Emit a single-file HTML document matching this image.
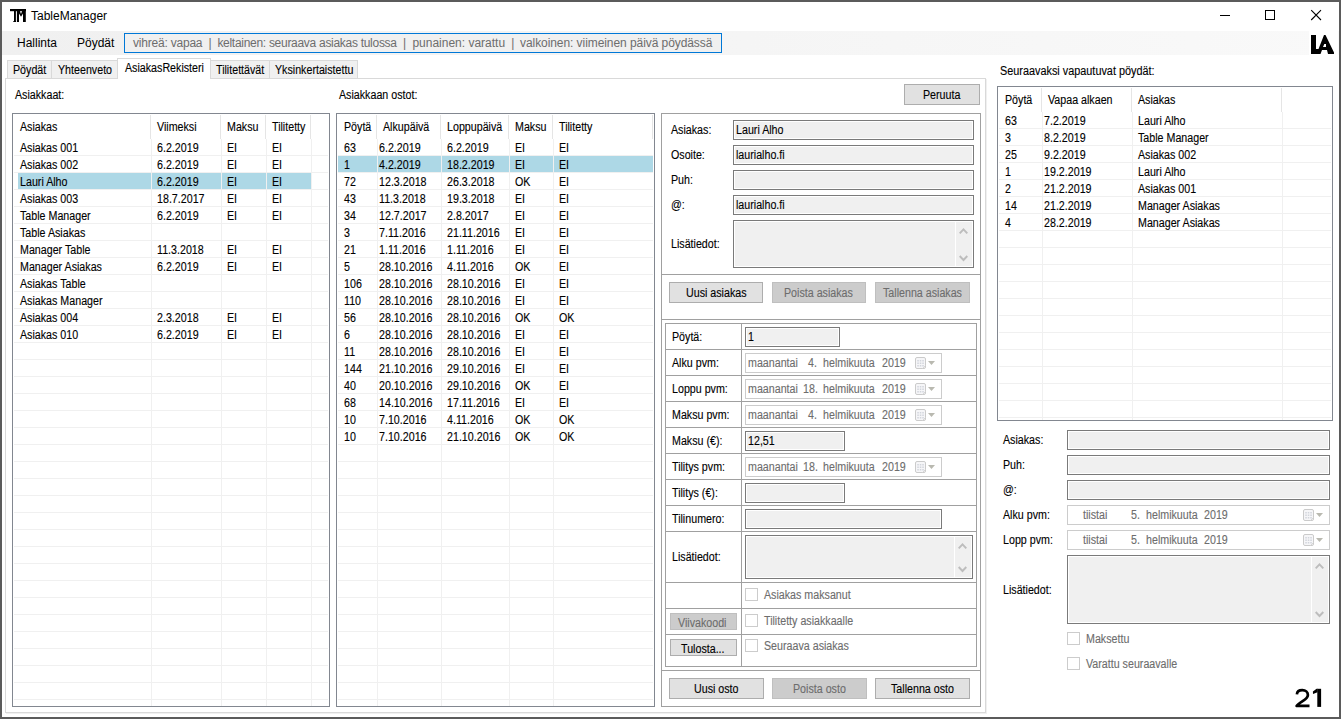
<!DOCTYPE html>
<html><head><meta charset="utf-8"><title>TableManager</title>
<style>
*{margin:0;padding:0;box-sizing:border-box;}
html,body{width:1341px;height:719px;overflow:hidden;background:#fff;}
body{position:relative;font-family:"Liberation Sans", sans-serif;}
div{position:absolute;}
.t{white-space:pre;line-height:1;transform-origin:0 0;}
.m{-webkit-text-stroke:0.12px currentColor;}
</style></head><body>

<div style="left:0px;top:0px;width:1341px;height:719px;background:#5b5b5b;"></div>
<div style="left:2px;top:2px;width:1337px;height:715px;background:#ffffff;"></div>
<svg style="position:absolute;left:0;top:0" width="40" height="30" viewBox="0 0 40 30">
<rect x="10" y="9" width="16" height="2.2" fill="#000"/>
<rect x="14" y="11" width="1.9" height="11" fill="#000"/>
<rect x="13.3" y="21" width="2.6" height="1" fill="#000"/>
<rect x="16.9" y="11" width="2.1" height="11" fill="#000"/>
<rect x="23" y="11" width="2.8" height="11" fill="#000"/>
<polygon points="19,11 19.9,11 21,14 22.1,11 23,11 23,13.6 21,16.8 19,13.6" fill="#000"/>
</svg>
<div class="t" style="left:31px;top:10px;font-size:12px;color:#000;letter-spacing:0px;">TableManager</div>
<div style="left:1220px;top:15px;width:10px;height:1px;background:#000;"></div>
<div style="left:1265px;top:10px;width:10px;height:10px;border:1px solid #000;"></div>
<svg style="position:absolute;left:1310px;top:9px" width="13" height="13" viewBox="0 0 13 13">
<path d="M1.2 1.2 L11 11 M11 1.2 L1.2 11" stroke="#000" stroke-width="1.1" fill="none"/>
</svg>
<div style="left:2px;top:31px;width:1337px;height:24px;background:linear-gradient(to right,#f0f0f0,#f9f9f9);"></div>
<div class="t" style="left:17px;top:37px;font-size:12px;color:#000;letter-spacing:0px;">Hallinta</div>
<div class="t" style="left:77px;top:37px;font-size:12px;color:#000;letter-spacing:0px;">Pöydät</div>
<div style="left:124px;top:33px;width:598px;height:20px;border:1px solid #0078d7;background:#f0f0f0;"></div>
<div class="t" style="left:133px;top:37px;font-size:12px;color:#6d6d6d;letter-spacing:-0.21px;">vihreä: vapaa</div>
<div class="t" style="left:208.6px;top:37px;font-size:12px;color:#6d6d6d;letter-spacing:0px;">|</div>
<div class="t" style="left:217.4px;top:37px;font-size:12px;color:#6d6d6d;letter-spacing:-0.29px;">keltainen: seuraava asiakas tulossa</div>
<div class="t" style="left:403px;top:37px;font-size:12px;color:#6d6d6d;letter-spacing:0px;">|</div>
<div class="t" style="left:412.4px;top:37px;font-size:12px;color:#6d6d6d;letter-spacing:0px;">punainen: varattu</div>
<div class="t" style="left:511.2px;top:37px;font-size:12px;color:#6d6d6d;letter-spacing:0px;">|</div>
<div class="t" style="left:520px;top:37px;font-size:12px;color:#6d6d6d;letter-spacing:-0.07px;">valkoinen: viimeinen päivä pöydässä</div>
<div style="left:1309px;top:31px;width:29px;height:24px;background:#ffffff;"></div>
<svg style="position:absolute;left:1300px;top:28px" width="40" height="30" viewBox="1300 28 40 30">
<path fill-rule="evenodd" fill="#000" d="M1311 35 L1316 35 L1316 49 L1318.5 49 L1324 35 L1325.5 35 L1334 52.5 L1334 54 L1328 54 L1327 50 L1322 50 L1320.5 54 L1311 54 Z M1324.3 44 L1326 44 L1326 47 L1323 47 Z"/>
</svg>
<div style="left:5px;top:78px;width:981px;height:635px;border:1px solid #d9d9d9;background:#fff;"></div>
<div style="left:986px;top:79px;width:1px;height:635px;background:#f0f0f0;"></div>
<div style="left:6px;top:713px;width:981px;height:1px;background:#f0f0f0;"></div>
<div style="left:7px;top:60px;width:45px;height:19px;border:1px solid #d9d9d9;background:#f0f0f0;"></div>
<div class="t m" style="left:13px;top:64px;font-size:12px;color:#000;transform:scaleX(0.89);">Pöydät</div>
<div style="left:51px;top:60px;width:67px;height:19px;border:1px solid #d9d9d9;background:#f0f0f0;"></div>
<div class="t m" style="left:58px;top:64px;font-size:12px;color:#000;transform:scaleX(0.89);">Yhteenveto</div>
<div style="left:210px;top:60px;width:60px;height:19px;border:1px solid #d9d9d9;background:#f0f0f0;"></div>
<div class="t m" style="left:216px;top:64px;font-size:12px;color:#000;transform:scaleX(0.89);">Tilitettävät</div>
<div style="left:269px;top:60px;width:89px;height:19px;border:1px solid #d9d9d9;background:#f0f0f0;"></div>
<div class="t m" style="left:275px;top:64px;font-size:12px;color:#000;transform:scaleX(0.89);">Yksinkertaistettu</div>
<div style="left:117px;top:58px;width:94px;height:21px;border:1px solid #d9d9d9;background:#fff;border-bottom:none;"></div>
<div class="t m" style="left:125px;top:62px;font-size:12px;color:#000;transform:scaleX(0.89);">AsiakasRekisteri</div>
<div class="t m" style="left:15px;top:89px;font-size:12px;color:#000;transform:scaleX(0.89);">Asiakkaat:</div>
<div class="t m" style="left:339px;top:89px;font-size:12px;color:#000;transform:scaleX(0.89);">Asiakkaan ostot:</div>
<div style="left:12px;top:113px;width:318px;height:594px;border:1px solid #828790;background:#fff;"></div>
<div style="left:150px;top:115px;width:1px;height:24px;background:#e5e5e5;"></div>
<div style="left:220px;top:115px;width:1px;height:24px;background:#e5e5e5;"></div>
<div style="left:265px;top:115px;width:1px;height:24px;background:#e5e5e5;"></div>
<div style="left:310px;top:115px;width:1px;height:24px;background:#e5e5e5;"></div>
<div class="t m" style="left:20px;top:121px;font-size:12px;color:#000;transform:scaleX(0.89);">Asiakas</div>
<div class="t m" style="left:157px;top:121px;font-size:12px;color:#000;transform:scaleX(0.89);">Viimeksi</div>
<div class="t m" style="left:227px;top:121px;font-size:12px;color:#000;transform:scaleX(0.89);">Maksu</div>
<div class="t m" style="left:272px;top:121px;font-size:12px;color:#000;transform:scaleX(0.89);">Tilitetty</div>
<div style="left:18px;top:173px;width:293px;height:16px;background:#add8e6;"></div>
<div style="left:14px;top:155px;width:314px;height:1px;background:#f0f0f0;"></div>
<div style="left:14px;top:172px;width:314px;height:1px;background:#f0f0f0;"></div>
<div style="left:14px;top:189px;width:314px;height:1px;background:#f0f0f0;"></div>
<div style="left:14px;top:206px;width:314px;height:1px;background:#f0f0f0;"></div>
<div style="left:14px;top:223px;width:314px;height:1px;background:#f0f0f0;"></div>
<div style="left:14px;top:240px;width:314px;height:1px;background:#f0f0f0;"></div>
<div style="left:14px;top:257px;width:314px;height:1px;background:#f0f0f0;"></div>
<div style="left:14px;top:274px;width:314px;height:1px;background:#f0f0f0;"></div>
<div style="left:14px;top:291px;width:314px;height:1px;background:#f0f0f0;"></div>
<div style="left:14px;top:308px;width:314px;height:1px;background:#f0f0f0;"></div>
<div style="left:14px;top:325px;width:314px;height:1px;background:#f0f0f0;"></div>
<div style="left:14px;top:342px;width:314px;height:1px;background:#f0f0f0;"></div>
<div style="left:14px;top:359px;width:314px;height:1px;background:#f0f0f0;"></div>
<div style="left:14px;top:376px;width:314px;height:1px;background:#f0f0f0;"></div>
<div style="left:14px;top:393px;width:314px;height:1px;background:#f0f0f0;"></div>
<div style="left:14px;top:410px;width:314px;height:1px;background:#f0f0f0;"></div>
<div style="left:14px;top:427px;width:314px;height:1px;background:#f0f0f0;"></div>
<div style="left:14px;top:444px;width:314px;height:1px;background:#f0f0f0;"></div>
<div style="left:14px;top:461px;width:314px;height:1px;background:#f0f0f0;"></div>
<div style="left:14px;top:478px;width:314px;height:1px;background:#f0f0f0;"></div>
<div style="left:14px;top:495px;width:314px;height:1px;background:#f0f0f0;"></div>
<div style="left:14px;top:512px;width:314px;height:1px;background:#f0f0f0;"></div>
<div style="left:14px;top:529px;width:314px;height:1px;background:#f0f0f0;"></div>
<div style="left:14px;top:546px;width:314px;height:1px;background:#f0f0f0;"></div>
<div style="left:14px;top:563px;width:314px;height:1px;background:#f0f0f0;"></div>
<div style="left:14px;top:580px;width:314px;height:1px;background:#f0f0f0;"></div>
<div style="left:14px;top:597px;width:314px;height:1px;background:#f0f0f0;"></div>
<div style="left:14px;top:614px;width:314px;height:1px;background:#f0f0f0;"></div>
<div style="left:14px;top:631px;width:314px;height:1px;background:#f0f0f0;"></div>
<div style="left:14px;top:648px;width:314px;height:1px;background:#f0f0f0;"></div>
<div style="left:14px;top:665px;width:314px;height:1px;background:#f0f0f0;"></div>
<div style="left:14px;top:682px;width:314px;height:1px;background:#f0f0f0;"></div>
<div style="left:14px;top:699px;width:314px;height:1px;background:#f0f0f0;"></div>
<div style="left:151px;top:139px;width:1px;height:567px;background:#f0f0f0;"></div>
<div style="left:221px;top:139px;width:1px;height:567px;background:#f0f0f0;"></div>
<div style="left:266px;top:139px;width:1px;height:567px;background:#f0f0f0;"></div>
<div style="left:311px;top:139px;width:1px;height:567px;background:#f0f0f0;"></div>
<div class="t m" style="left:20px;top:142px;font-size:12px;color:#000;transform:scaleX(0.89);">Asiakas 001</div>
<div class="t m" style="left:157px;top:142px;font-size:12px;color:#000;transform:scaleX(0.89);">6.2.2019</div>
<div class="t m" style="left:227px;top:142px;font-size:12px;color:#000;transform:scaleX(0.89);">EI</div>
<div class="t m" style="left:272px;top:142px;font-size:12px;color:#000;transform:scaleX(0.89);">EI</div>
<div class="t m" style="left:20px;top:159px;font-size:12px;color:#000;transform:scaleX(0.89);">Asiakas 002</div>
<div class="t m" style="left:157px;top:159px;font-size:12px;color:#000;transform:scaleX(0.89);">6.2.2019</div>
<div class="t m" style="left:227px;top:159px;font-size:12px;color:#000;transform:scaleX(0.89);">EI</div>
<div class="t m" style="left:272px;top:159px;font-size:12px;color:#000;transform:scaleX(0.89);">EI</div>
<div class="t m" style="left:20px;top:176px;font-size:12px;color:#000;transform:scaleX(0.89);">Lauri Alho</div>
<div class="t m" style="left:157px;top:176px;font-size:12px;color:#000;transform:scaleX(0.89);">6.2.2019</div>
<div class="t m" style="left:227px;top:176px;font-size:12px;color:#000;transform:scaleX(0.89);">EI</div>
<div class="t m" style="left:272px;top:176px;font-size:12px;color:#000;transform:scaleX(0.89);">EI</div>
<div class="t m" style="left:20px;top:193px;font-size:12px;color:#000;transform:scaleX(0.89);">Asiakas 003</div>
<div class="t m" style="left:157px;top:193px;font-size:12px;color:#000;transform:scaleX(0.89);">18.7.2017</div>
<div class="t m" style="left:227px;top:193px;font-size:12px;color:#000;transform:scaleX(0.89);">EI</div>
<div class="t m" style="left:272px;top:193px;font-size:12px;color:#000;transform:scaleX(0.89);">EI</div>
<div class="t m" style="left:20px;top:210px;font-size:12px;color:#000;transform:scaleX(0.89);">Table Manager</div>
<div class="t m" style="left:157px;top:210px;font-size:12px;color:#000;transform:scaleX(0.89);">6.2.2019</div>
<div class="t m" style="left:227px;top:210px;font-size:12px;color:#000;transform:scaleX(0.89);">EI</div>
<div class="t m" style="left:272px;top:210px;font-size:12px;color:#000;transform:scaleX(0.89);">EI</div>
<div class="t m" style="left:20px;top:227px;font-size:12px;color:#000;transform:scaleX(0.89);">Table Asiakas</div>
<div class="t m" style="left:20px;top:244px;font-size:12px;color:#000;transform:scaleX(0.89);">Manager Table</div>
<div class="t m" style="left:157px;top:244px;font-size:12px;color:#000;transform:scaleX(0.89);">11.3.2018</div>
<div class="t m" style="left:227px;top:244px;font-size:12px;color:#000;transform:scaleX(0.89);">EI</div>
<div class="t m" style="left:272px;top:244px;font-size:12px;color:#000;transform:scaleX(0.89);">EI</div>
<div class="t m" style="left:20px;top:261px;font-size:12px;color:#000;transform:scaleX(0.89);">Manager Asiakas</div>
<div class="t m" style="left:157px;top:261px;font-size:12px;color:#000;transform:scaleX(0.89);">6.2.2019</div>
<div class="t m" style="left:227px;top:261px;font-size:12px;color:#000;transform:scaleX(0.89);">EI</div>
<div class="t m" style="left:272px;top:261px;font-size:12px;color:#000;transform:scaleX(0.89);">EI</div>
<div class="t m" style="left:20px;top:278px;font-size:12px;color:#000;transform:scaleX(0.89);">Asiakas Table</div>
<div class="t m" style="left:20px;top:295px;font-size:12px;color:#000;transform:scaleX(0.89);">Asiakas Manager</div>
<div class="t m" style="left:20px;top:312px;font-size:12px;color:#000;transform:scaleX(0.89);">Asiakas 004</div>
<div class="t m" style="left:157px;top:312px;font-size:12px;color:#000;transform:scaleX(0.89);">2.3.2018</div>
<div class="t m" style="left:227px;top:312px;font-size:12px;color:#000;transform:scaleX(0.89);">EI</div>
<div class="t m" style="left:272px;top:312px;font-size:12px;color:#000;transform:scaleX(0.89);">EI</div>
<div class="t m" style="left:20px;top:329px;font-size:12px;color:#000;transform:scaleX(0.89);">Asiakas 010</div>
<div class="t m" style="left:157px;top:329px;font-size:12px;color:#000;transform:scaleX(0.89);">6.2.2019</div>
<div class="t m" style="left:227px;top:329px;font-size:12px;color:#000;transform:scaleX(0.89);">EI</div>
<div class="t m" style="left:272px;top:329px;font-size:12px;color:#000;transform:scaleX(0.89);">EI</div>
<div style="left:336px;top:113px;width:319px;height:594px;border:1px solid #828790;background:#fff;"></div>
<div style="left:376px;top:115px;width:1px;height:24px;background:#e5e5e5;"></div>
<div style="left:440px;top:115px;width:1px;height:24px;background:#e5e5e5;"></div>
<div style="left:508px;top:115px;width:1px;height:24px;background:#e5e5e5;"></div>
<div style="left:552px;top:115px;width:1px;height:24px;background:#e5e5e5;"></div>
<div style="left:652px;top:115px;width:1px;height:24px;background:#e5e5e5;"></div>
<div class="t m" style="left:344px;top:121px;font-size:12px;color:#000;transform:scaleX(0.89);">Pöytä</div>
<div class="t m" style="left:383px;top:121px;font-size:12px;color:#000;transform:scaleX(0.89);">Alkupäivä</div>
<div class="t m" style="left:447px;top:121px;font-size:12px;color:#000;transform:scaleX(0.89);">Loppupäivä</div>
<div class="t m" style="left:515px;top:121px;font-size:12px;color:#000;transform:scaleX(0.89);">Maksu</div>
<div class="t m" style="left:559px;top:121px;font-size:12px;color:#000;transform:scaleX(0.89);">Tilitetty</div>
<div style="left:338px;top:156px;width:315px;height:16px;background:#add8e6;"></div>
<div style="left:338px;top:155px;width:315px;height:1px;background:#f0f0f0;"></div>
<div style="left:338px;top:172px;width:315px;height:1px;background:#f0f0f0;"></div>
<div style="left:338px;top:189px;width:315px;height:1px;background:#f0f0f0;"></div>
<div style="left:338px;top:206px;width:315px;height:1px;background:#f0f0f0;"></div>
<div style="left:338px;top:223px;width:315px;height:1px;background:#f0f0f0;"></div>
<div style="left:338px;top:240px;width:315px;height:1px;background:#f0f0f0;"></div>
<div style="left:338px;top:257px;width:315px;height:1px;background:#f0f0f0;"></div>
<div style="left:338px;top:274px;width:315px;height:1px;background:#f0f0f0;"></div>
<div style="left:338px;top:291px;width:315px;height:1px;background:#f0f0f0;"></div>
<div style="left:338px;top:308px;width:315px;height:1px;background:#f0f0f0;"></div>
<div style="left:338px;top:325px;width:315px;height:1px;background:#f0f0f0;"></div>
<div style="left:338px;top:342px;width:315px;height:1px;background:#f0f0f0;"></div>
<div style="left:338px;top:359px;width:315px;height:1px;background:#f0f0f0;"></div>
<div style="left:338px;top:376px;width:315px;height:1px;background:#f0f0f0;"></div>
<div style="left:338px;top:393px;width:315px;height:1px;background:#f0f0f0;"></div>
<div style="left:338px;top:410px;width:315px;height:1px;background:#f0f0f0;"></div>
<div style="left:338px;top:427px;width:315px;height:1px;background:#f0f0f0;"></div>
<div style="left:338px;top:444px;width:315px;height:1px;background:#f0f0f0;"></div>
<div style="left:338px;top:461px;width:315px;height:1px;background:#f0f0f0;"></div>
<div style="left:338px;top:478px;width:315px;height:1px;background:#f0f0f0;"></div>
<div style="left:338px;top:495px;width:315px;height:1px;background:#f0f0f0;"></div>
<div style="left:338px;top:512px;width:315px;height:1px;background:#f0f0f0;"></div>
<div style="left:338px;top:529px;width:315px;height:1px;background:#f0f0f0;"></div>
<div style="left:338px;top:546px;width:315px;height:1px;background:#f0f0f0;"></div>
<div style="left:338px;top:563px;width:315px;height:1px;background:#f0f0f0;"></div>
<div style="left:338px;top:580px;width:315px;height:1px;background:#f0f0f0;"></div>
<div style="left:338px;top:597px;width:315px;height:1px;background:#f0f0f0;"></div>
<div style="left:338px;top:614px;width:315px;height:1px;background:#f0f0f0;"></div>
<div style="left:338px;top:631px;width:315px;height:1px;background:#f0f0f0;"></div>
<div style="left:338px;top:648px;width:315px;height:1px;background:#f0f0f0;"></div>
<div style="left:338px;top:665px;width:315px;height:1px;background:#f0f0f0;"></div>
<div style="left:338px;top:682px;width:315px;height:1px;background:#f0f0f0;"></div>
<div style="left:338px;top:699px;width:315px;height:1px;background:#f0f0f0;"></div>
<div style="left:377px;top:139px;width:1px;height:567px;background:#f0f0f0;"></div>
<div style="left:441px;top:139px;width:1px;height:567px;background:#f0f0f0;"></div>
<div style="left:509px;top:139px;width:1px;height:567px;background:#f0f0f0;"></div>
<div style="left:553px;top:139px;width:1px;height:567px;background:#f0f0f0;"></div>
<div class="t m" style="left:344px;top:142px;font-size:12px;color:#000;transform:scaleX(0.89);">63</div>
<div class="t m" style="left:379px;top:142px;font-size:12px;color:#000;transform:scaleX(0.89);">6.2.2019</div>
<div class="t m" style="left:447px;top:142px;font-size:12px;color:#000;transform:scaleX(0.89);">6.2.2019</div>
<div class="t m" style="left:515px;top:142px;font-size:12px;color:#000;transform:scaleX(0.89);">EI</div>
<div class="t m" style="left:559px;top:142px;font-size:12px;color:#000;transform:scaleX(0.89);">EI</div>
<div class="t m" style="left:344px;top:159px;font-size:12px;color:#000;transform:scaleX(0.89);">1</div>
<div class="t m" style="left:379px;top:159px;font-size:12px;color:#000;transform:scaleX(0.89);">4.2.2019</div>
<div class="t m" style="left:447px;top:159px;font-size:12px;color:#000;transform:scaleX(0.89);">18.2.2019</div>
<div class="t m" style="left:515px;top:159px;font-size:12px;color:#000;transform:scaleX(0.89);">EI</div>
<div class="t m" style="left:559px;top:159px;font-size:12px;color:#000;transform:scaleX(0.89);">EI</div>
<div class="t m" style="left:344px;top:176px;font-size:12px;color:#000;transform:scaleX(0.89);">72</div>
<div class="t m" style="left:379px;top:176px;font-size:12px;color:#000;transform:scaleX(0.89);">12.3.2018</div>
<div class="t m" style="left:447px;top:176px;font-size:12px;color:#000;transform:scaleX(0.89);">26.3.2018</div>
<div class="t m" style="left:515px;top:176px;font-size:12px;color:#000;transform:scaleX(0.89);">OK</div>
<div class="t m" style="left:559px;top:176px;font-size:12px;color:#000;transform:scaleX(0.89);">EI</div>
<div class="t m" style="left:344px;top:193px;font-size:12px;color:#000;transform:scaleX(0.89);">43</div>
<div class="t m" style="left:379px;top:193px;font-size:12px;color:#000;transform:scaleX(0.89);">11.3.2018</div>
<div class="t m" style="left:447px;top:193px;font-size:12px;color:#000;transform:scaleX(0.89);">19.3.2018</div>
<div class="t m" style="left:515px;top:193px;font-size:12px;color:#000;transform:scaleX(0.89);">EI</div>
<div class="t m" style="left:559px;top:193px;font-size:12px;color:#000;transform:scaleX(0.89);">EI</div>
<div class="t m" style="left:344px;top:210px;font-size:12px;color:#000;transform:scaleX(0.89);">34</div>
<div class="t m" style="left:379px;top:210px;font-size:12px;color:#000;transform:scaleX(0.89);">12.7.2017</div>
<div class="t m" style="left:447px;top:210px;font-size:12px;color:#000;transform:scaleX(0.89);">2.8.2017</div>
<div class="t m" style="left:515px;top:210px;font-size:12px;color:#000;transform:scaleX(0.89);">EI</div>
<div class="t m" style="left:559px;top:210px;font-size:12px;color:#000;transform:scaleX(0.89);">EI</div>
<div class="t m" style="left:344px;top:227px;font-size:12px;color:#000;transform:scaleX(0.89);">3</div>
<div class="t m" style="left:379px;top:227px;font-size:12px;color:#000;transform:scaleX(0.89);">7.11.2016</div>
<div class="t m" style="left:447px;top:227px;font-size:12px;color:#000;transform:scaleX(0.89);">21.11.2016</div>
<div class="t m" style="left:515px;top:227px;font-size:12px;color:#000;transform:scaleX(0.89);">EI</div>
<div class="t m" style="left:559px;top:227px;font-size:12px;color:#000;transform:scaleX(0.89);">EI</div>
<div class="t m" style="left:344px;top:244px;font-size:12px;color:#000;transform:scaleX(0.89);">21</div>
<div class="t m" style="left:379px;top:244px;font-size:12px;color:#000;transform:scaleX(0.89);">1.11.2016</div>
<div class="t m" style="left:447px;top:244px;font-size:12px;color:#000;transform:scaleX(0.89);">1.11.2016</div>
<div class="t m" style="left:515px;top:244px;font-size:12px;color:#000;transform:scaleX(0.89);">EI</div>
<div class="t m" style="left:559px;top:244px;font-size:12px;color:#000;transform:scaleX(0.89);">EI</div>
<div class="t m" style="left:344px;top:261px;font-size:12px;color:#000;transform:scaleX(0.89);">5</div>
<div class="t m" style="left:379px;top:261px;font-size:12px;color:#000;transform:scaleX(0.89);">28.10.2016</div>
<div class="t m" style="left:447px;top:261px;font-size:12px;color:#000;transform:scaleX(0.89);">4.11.2016</div>
<div class="t m" style="left:515px;top:261px;font-size:12px;color:#000;transform:scaleX(0.89);">OK</div>
<div class="t m" style="left:559px;top:261px;font-size:12px;color:#000;transform:scaleX(0.89);">EI</div>
<div class="t m" style="left:344px;top:278px;font-size:12px;color:#000;transform:scaleX(0.89);">106</div>
<div class="t m" style="left:379px;top:278px;font-size:12px;color:#000;transform:scaleX(0.89);">28.10.2016</div>
<div class="t m" style="left:447px;top:278px;font-size:12px;color:#000;transform:scaleX(0.89);">28.10.2016</div>
<div class="t m" style="left:515px;top:278px;font-size:12px;color:#000;transform:scaleX(0.89);">EI</div>
<div class="t m" style="left:559px;top:278px;font-size:12px;color:#000;transform:scaleX(0.89);">EI</div>
<div class="t m" style="left:344px;top:295px;font-size:12px;color:#000;transform:scaleX(0.89);">110</div>
<div class="t m" style="left:379px;top:295px;font-size:12px;color:#000;transform:scaleX(0.89);">28.10.2016</div>
<div class="t m" style="left:447px;top:295px;font-size:12px;color:#000;transform:scaleX(0.89);">28.10.2016</div>
<div class="t m" style="left:515px;top:295px;font-size:12px;color:#000;transform:scaleX(0.89);">EI</div>
<div class="t m" style="left:559px;top:295px;font-size:12px;color:#000;transform:scaleX(0.89);">EI</div>
<div class="t m" style="left:344px;top:312px;font-size:12px;color:#000;transform:scaleX(0.89);">56</div>
<div class="t m" style="left:379px;top:312px;font-size:12px;color:#000;transform:scaleX(0.89);">28.10.2016</div>
<div class="t m" style="left:447px;top:312px;font-size:12px;color:#000;transform:scaleX(0.89);">28.10.2016</div>
<div class="t m" style="left:515px;top:312px;font-size:12px;color:#000;transform:scaleX(0.89);">OK</div>
<div class="t m" style="left:559px;top:312px;font-size:12px;color:#000;transform:scaleX(0.89);">OK</div>
<div class="t m" style="left:344px;top:329px;font-size:12px;color:#000;transform:scaleX(0.89);">6</div>
<div class="t m" style="left:379px;top:329px;font-size:12px;color:#000;transform:scaleX(0.89);">28.10.2016</div>
<div class="t m" style="left:447px;top:329px;font-size:12px;color:#000;transform:scaleX(0.89);">28.10.2016</div>
<div class="t m" style="left:515px;top:329px;font-size:12px;color:#000;transform:scaleX(0.89);">EI</div>
<div class="t m" style="left:559px;top:329px;font-size:12px;color:#000;transform:scaleX(0.89);">EI</div>
<div class="t m" style="left:344px;top:346px;font-size:12px;color:#000;transform:scaleX(0.89);">11</div>
<div class="t m" style="left:379px;top:346px;font-size:12px;color:#000;transform:scaleX(0.89);">28.10.2016</div>
<div class="t m" style="left:447px;top:346px;font-size:12px;color:#000;transform:scaleX(0.89);">28.10.2016</div>
<div class="t m" style="left:515px;top:346px;font-size:12px;color:#000;transform:scaleX(0.89);">EI</div>
<div class="t m" style="left:559px;top:346px;font-size:12px;color:#000;transform:scaleX(0.89);">EI</div>
<div class="t m" style="left:344px;top:363px;font-size:12px;color:#000;transform:scaleX(0.89);">144</div>
<div class="t m" style="left:379px;top:363px;font-size:12px;color:#000;transform:scaleX(0.89);">21.10.2016</div>
<div class="t m" style="left:447px;top:363px;font-size:12px;color:#000;transform:scaleX(0.89);">29.10.2016</div>
<div class="t m" style="left:515px;top:363px;font-size:12px;color:#000;transform:scaleX(0.89);">EI</div>
<div class="t m" style="left:559px;top:363px;font-size:12px;color:#000;transform:scaleX(0.89);">EI</div>
<div class="t m" style="left:344px;top:380px;font-size:12px;color:#000;transform:scaleX(0.89);">40</div>
<div class="t m" style="left:379px;top:380px;font-size:12px;color:#000;transform:scaleX(0.89);">20.10.2016</div>
<div class="t m" style="left:447px;top:380px;font-size:12px;color:#000;transform:scaleX(0.89);">29.10.2016</div>
<div class="t m" style="left:515px;top:380px;font-size:12px;color:#000;transform:scaleX(0.89);">OK</div>
<div class="t m" style="left:559px;top:380px;font-size:12px;color:#000;transform:scaleX(0.89);">EI</div>
<div class="t m" style="left:344px;top:397px;font-size:12px;color:#000;transform:scaleX(0.89);">68</div>
<div class="t m" style="left:379px;top:397px;font-size:12px;color:#000;transform:scaleX(0.89);">14.10.2016</div>
<div class="t m" style="left:447px;top:397px;font-size:12px;color:#000;transform:scaleX(0.89);">17.11.2016</div>
<div class="t m" style="left:515px;top:397px;font-size:12px;color:#000;transform:scaleX(0.89);">EI</div>
<div class="t m" style="left:559px;top:397px;font-size:12px;color:#000;transform:scaleX(0.89);">EI</div>
<div class="t m" style="left:344px;top:414px;font-size:12px;color:#000;transform:scaleX(0.89);">10</div>
<div class="t m" style="left:379px;top:414px;font-size:12px;color:#000;transform:scaleX(0.89);">7.10.2016</div>
<div class="t m" style="left:447px;top:414px;font-size:12px;color:#000;transform:scaleX(0.89);">4.11.2016</div>
<div class="t m" style="left:515px;top:414px;font-size:12px;color:#000;transform:scaleX(0.89);">OK</div>
<div class="t m" style="left:559px;top:414px;font-size:12px;color:#000;transform:scaleX(0.89);">OK</div>
<div class="t m" style="left:344px;top:431px;font-size:12px;color:#000;transform:scaleX(0.89);">10</div>
<div class="t m" style="left:379px;top:431px;font-size:12px;color:#000;transform:scaleX(0.89);">7.10.2016</div>
<div class="t m" style="left:447px;top:431px;font-size:12px;color:#000;transform:scaleX(0.89);">21.10.2016</div>
<div class="t m" style="left:515px;top:431px;font-size:12px;color:#000;transform:scaleX(0.89);">OK</div>
<div class="t m" style="left:559px;top:431px;font-size:12px;color:#000;transform:scaleX(0.89);">OK</div>
<div style="left:904px;top:84px;width:76px;height:21px;border:1px solid #adadad;background:#e1e1e1;"></div>
<div class="t m" style="left:923px;top:89px;font-size:12px;color:#000;transform:scaleX(0.89);">Peruuta</div>
<div style="left:661px;top:113px;width:320px;height:594px;border:1px solid #a0a0a0;background:#fff;"></div>
<div style="left:662px;top:274px;width:318px;height:1px;background:#a0a0a0;"></div>
<div style="left:662px;top:319px;width:318px;height:1px;background:#a0a0a0;"></div>
<div style="left:662px;top:670px;width:318px;height:1px;background:#a0a0a0;"></div>
<div class="t m" style="left:671px;top:124px;font-size:12px;color:#000;transform:scaleX(0.89);">Asiakas:</div>
<div style="left:733px;top:120px;width:241px;height:20px;border:1px solid #7a7a7a;background:#f0f0f0;box-shadow:inset 0 0 0 1px #fff;"></div>
<div class="t m" style="left:736px;top:124px;font-size:12px;color:#000;transform:scaleX(0.89);">Lauri Alho</div>
<div class="t m" style="left:671px;top:149px;font-size:12px;color:#000;transform:scaleX(0.89);">Osoite:</div>
<div style="left:733px;top:145px;width:241px;height:20px;border:1px solid #7a7a7a;background:#f0f0f0;box-shadow:inset 0 0 0 1px #fff;"></div>
<div class="t m" style="left:736px;top:149px;font-size:12px;color:#000;transform:scaleX(0.89);">laurialho.fi</div>
<div class="t m" style="left:671px;top:174px;font-size:12px;color:#000;transform:scaleX(0.89);">Puh:</div>
<div style="left:733px;top:170px;width:241px;height:20px;border:1px solid #7a7a7a;background:#f0f0f0;box-shadow:inset 0 0 0 1px #fff;"></div>
<div class="t m" style="left:671px;top:199px;font-size:12px;color:#000;transform:scaleX(0.89);">@:</div>
<div style="left:733px;top:195px;width:241px;height:20px;border:1px solid #7a7a7a;background:#f0f0f0;box-shadow:inset 0 0 0 1px #fff;"></div>
<div class="t m" style="left:736px;top:199px;font-size:12px;color:#000;transform:scaleX(0.89);">laurialho.fi</div>
<div class="t m" style="left:671px;top:238px;font-size:12px;color:#000;transform:scaleX(0.89);">Lisätiedot:</div>
<div style="left:733px;top:220px;width:241px;height:48px;border:1px solid #7a7a7a;background:#f0f0f0;box-shadow:inset 0 0 0 1px #fff;"></div>
<div style="left:955px;top:221px;width:1px;height:46px;background:#ffffff;"></div>
<svg style="position:absolute;left:0;top:0;overflow:visible" width="1" height="1">
<path d="M959.7 233.4 L963.5 229.4 L967.3 233.4" stroke="#bdbdbd" stroke-width="1.9" fill="none"/>
<path d="M959.7 256 L963.5 260 L967.3 256" stroke="#bdbdbd" stroke-width="1.9" fill="none"/>
</svg>
<div style="left:669px;top:282px;width:94px;height:21px;border:1px solid #adadad;background:#e1e1e1;"></div>
<div class="t m" style="left:686px;top:287px;font-size:12px;color:#000;transform:scaleX(0.89);">Uusi asiakas</div>
<div style="left:772px;top:282px;width:94px;height:21px;border:1px solid #bfbfbf;background:#cccccc;"></div>
<div class="t m" style="left:784px;top:287px;font-size:12px;color:#6d6d6d;transform:scaleX(0.89);">Poista asiakas</div>
<div style="left:875px;top:282px;width:95px;height:21px;border:1px solid #bfbfbf;background:#cccccc;"></div>
<div class="t m" style="left:883px;top:287px;font-size:12px;color:#6d6d6d;transform:scaleX(0.89);">Tallenna asiakas</div>
<div style="left:665px;top:323px;width:312px;height:344px;border:1px solid #a0a0a0;background:#fff;"></div>
<div style="left:741px;top:324px;width:1px;height:342px;background:#a0a0a0;"></div>
<div style="left:666px;top:349px;width:310px;height:1px;background:#a0a0a0;"></div>
<div style="left:666px;top:375px;width:310px;height:1px;background:#a0a0a0;"></div>
<div style="left:666px;top:401px;width:310px;height:1px;background:#a0a0a0;"></div>
<div style="left:666px;top:427px;width:310px;height:1px;background:#a0a0a0;"></div>
<div style="left:666px;top:453px;width:310px;height:1px;background:#a0a0a0;"></div>
<div style="left:666px;top:479px;width:310px;height:1px;background:#a0a0a0;"></div>
<div style="left:666px;top:505px;width:310px;height:1px;background:#a0a0a0;"></div>
<div style="left:666px;top:531px;width:310px;height:1px;background:#a0a0a0;"></div>
<div style="left:666px;top:582px;width:310px;height:1px;background:#a0a0a0;"></div>
<div style="left:666px;top:608px;width:310px;height:1px;background:#a0a0a0;"></div>
<div style="left:666px;top:634px;width:310px;height:1px;background:#a0a0a0;"></div>
<div class="t m" style="left:672px;top:331px;font-size:12px;color:#000;transform:scaleX(0.89);">Pöytä:</div>
<div class="t m" style="left:672px;top:357px;font-size:12px;color:#000;transform:scaleX(0.89);">Alku pvm:</div>
<div class="t m" style="left:672px;top:383px;font-size:12px;color:#000;transform:scaleX(0.89);">Loppu pvm:</div>
<div class="t m" style="left:672px;top:409px;font-size:12px;color:#000;transform:scaleX(0.89);">Maksu pvm:</div>
<div class="t m" style="left:672px;top:435px;font-size:12px;color:#000;transform:scaleX(0.89);">Maksu (€):</div>
<div class="t m" style="left:672px;top:461px;font-size:12px;color:#000;transform:scaleX(0.89);">Tilitys pvm:</div>
<div class="t m" style="left:672px;top:487px;font-size:12px;color:#000;transform:scaleX(0.89);">Tilitys (€):</div>
<div class="t m" style="left:672px;top:513px;font-size:12px;color:#000;transform:scaleX(0.89);">Tilinumero:</div>
<div class="t m" style="left:672px;top:551px;font-size:12px;color:#000;transform:scaleX(0.89);">Lisätiedot:</div>
<div style="left:745px;top:353px;width:197px;height:20px;border:1px solid #cccccc;background:#fff;"></div>
<div class="t m" style="left:748px;top:357px;font-size:12px;color:#6d6d6d;transform:scaleX(0.89);">maanantai</div>
<div class="t m" style="left:808px;top:357px;font-size:12px;color:#6d6d6d;transform:scaleX(0.89);">4.</div>
<div class="t m" style="left:823px;top:357px;font-size:12px;color:#6d6d6d;transform:scaleX(0.89);">helmikuuta</div>
<div class="t m" style="left:882px;top:357px;font-size:12px;color:#6d6d6d;transform:scaleX(0.89);">2019</div>
<svg style="position:absolute;left:915px;top:357px" width="22" height="13" viewBox="0 0 22 13">
<rect x="0.5" y="0.5" width="10" height="11" rx="1.5" fill="#f6f6f8" stroke="#cbcbcb" stroke-width="1"/>
<rect x="2.3" y="3.0" width="1.5" height="1.5" fill="#d2d5dc"/><rect x="2.3" y="5.5" width="1.5" height="1.5" fill="#d2d5dc"/><rect x="2.3" y="8.0" width="1.5" height="1.5" fill="#d2d5dc"/><rect x="4.8" y="3.0" width="1.5" height="1.5" fill="#d2d5dc"/><rect x="4.8" y="5.5" width="1.5" height="1.5" fill="#d2d5dc"/><rect x="4.8" y="8.0" width="1.5" height="1.5" fill="#d2d5dc"/><rect x="7.3" y="3.0" width="1.5" height="1.5" fill="#d2d5dc"/><rect x="7.3" y="5.5" width="1.5" height="1.5" fill="#d2d5dc"/><rect x="7.3" y="8.0" width="1.5" height="1.5" fill="#d2d5dc"/>
<path d="M7.5 11.5 L10.5 8.5" stroke="#d8d8d8" stroke-width="1"/>
<path d="M13 4 L20 4 L16.5 8 Z" fill="#b9b9b0"/>
</svg>
<div style="left:745px;top:379px;width:197px;height:20px;border:1px solid #cccccc;background:#fff;"></div>
<div class="t m" style="left:748px;top:383px;font-size:12px;color:#6d6d6d;transform:scaleX(0.89);">maanantai</div>
<div class="t m" style="left:803px;top:383px;font-size:12px;color:#6d6d6d;transform:scaleX(0.89);">18.</div>
<div class="t m" style="left:823px;top:383px;font-size:12px;color:#6d6d6d;transform:scaleX(0.89);">helmikuuta</div>
<div class="t m" style="left:882px;top:383px;font-size:12px;color:#6d6d6d;transform:scaleX(0.89);">2019</div>
<svg style="position:absolute;left:915px;top:383px" width="22" height="13" viewBox="0 0 22 13">
<rect x="0.5" y="0.5" width="10" height="11" rx="1.5" fill="#f6f6f8" stroke="#cbcbcb" stroke-width="1"/>
<rect x="2.3" y="3.0" width="1.5" height="1.5" fill="#d2d5dc"/><rect x="2.3" y="5.5" width="1.5" height="1.5" fill="#d2d5dc"/><rect x="2.3" y="8.0" width="1.5" height="1.5" fill="#d2d5dc"/><rect x="4.8" y="3.0" width="1.5" height="1.5" fill="#d2d5dc"/><rect x="4.8" y="5.5" width="1.5" height="1.5" fill="#d2d5dc"/><rect x="4.8" y="8.0" width="1.5" height="1.5" fill="#d2d5dc"/><rect x="7.3" y="3.0" width="1.5" height="1.5" fill="#d2d5dc"/><rect x="7.3" y="5.5" width="1.5" height="1.5" fill="#d2d5dc"/><rect x="7.3" y="8.0" width="1.5" height="1.5" fill="#d2d5dc"/>
<path d="M7.5 11.5 L10.5 8.5" stroke="#d8d8d8" stroke-width="1"/>
<path d="M13 4 L20 4 L16.5 8 Z" fill="#b9b9b0"/>
</svg>
<div style="left:745px;top:405px;width:197px;height:20px;border:1px solid #cccccc;background:#fff;"></div>
<div class="t m" style="left:748px;top:409px;font-size:12px;color:#6d6d6d;transform:scaleX(0.89);">maanantai</div>
<div class="t m" style="left:808px;top:409px;font-size:12px;color:#6d6d6d;transform:scaleX(0.89);">4.</div>
<div class="t m" style="left:823px;top:409px;font-size:12px;color:#6d6d6d;transform:scaleX(0.89);">helmikuuta</div>
<div class="t m" style="left:882px;top:409px;font-size:12px;color:#6d6d6d;transform:scaleX(0.89);">2019</div>
<svg style="position:absolute;left:915px;top:409px" width="22" height="13" viewBox="0 0 22 13">
<rect x="0.5" y="0.5" width="10" height="11" rx="1.5" fill="#f6f6f8" stroke="#cbcbcb" stroke-width="1"/>
<rect x="2.3" y="3.0" width="1.5" height="1.5" fill="#d2d5dc"/><rect x="2.3" y="5.5" width="1.5" height="1.5" fill="#d2d5dc"/><rect x="2.3" y="8.0" width="1.5" height="1.5" fill="#d2d5dc"/><rect x="4.8" y="3.0" width="1.5" height="1.5" fill="#d2d5dc"/><rect x="4.8" y="5.5" width="1.5" height="1.5" fill="#d2d5dc"/><rect x="4.8" y="8.0" width="1.5" height="1.5" fill="#d2d5dc"/><rect x="7.3" y="3.0" width="1.5" height="1.5" fill="#d2d5dc"/><rect x="7.3" y="5.5" width="1.5" height="1.5" fill="#d2d5dc"/><rect x="7.3" y="8.0" width="1.5" height="1.5" fill="#d2d5dc"/>
<path d="M7.5 11.5 L10.5 8.5" stroke="#d8d8d8" stroke-width="1"/>
<path d="M13 4 L20 4 L16.5 8 Z" fill="#b9b9b0"/>
</svg>
<div style="left:745px;top:327px;width:95px;height:20px;border:1px solid #7a7a7a;background:#f0f0f0;box-shadow:inset 0 0 0 1px #fff;"></div>
<div class="t m" style="left:748px;top:331px;font-size:12px;color:#000;transform:scaleX(0.89);">1</div>
<div style="left:745px;top:431px;width:100px;height:20px;border:1px solid #7a7a7a;background:#f0f0f0;box-shadow:inset 0 0 0 1px #fff;"></div>
<div class="t m" style="left:748px;top:435px;font-size:12px;color:#000;transform:scaleX(0.89);">12,51</div>
<div style="left:745px;top:457px;width:197px;height:20px;border:1px solid #cccccc;background:#fff;"></div>
<div class="t m" style="left:748px;top:461px;font-size:12px;color:#6d6d6d;transform:scaleX(0.89);">maanantai</div>
<div class="t m" style="left:803px;top:461px;font-size:12px;color:#6d6d6d;transform:scaleX(0.89);">18.</div>
<div class="t m" style="left:823px;top:461px;font-size:12px;color:#6d6d6d;transform:scaleX(0.89);">helmikuuta</div>
<div class="t m" style="left:882px;top:461px;font-size:12px;color:#6d6d6d;transform:scaleX(0.89);">2019</div>
<svg style="position:absolute;left:915px;top:461px" width="22" height="13" viewBox="0 0 22 13">
<rect x="0.5" y="0.5" width="10" height="11" rx="1.5" fill="#f6f6f8" stroke="#cbcbcb" stroke-width="1"/>
<rect x="2.3" y="3.0" width="1.5" height="1.5" fill="#d2d5dc"/><rect x="2.3" y="5.5" width="1.5" height="1.5" fill="#d2d5dc"/><rect x="2.3" y="8.0" width="1.5" height="1.5" fill="#d2d5dc"/><rect x="4.8" y="3.0" width="1.5" height="1.5" fill="#d2d5dc"/><rect x="4.8" y="5.5" width="1.5" height="1.5" fill="#d2d5dc"/><rect x="4.8" y="8.0" width="1.5" height="1.5" fill="#d2d5dc"/><rect x="7.3" y="3.0" width="1.5" height="1.5" fill="#d2d5dc"/><rect x="7.3" y="5.5" width="1.5" height="1.5" fill="#d2d5dc"/><rect x="7.3" y="8.0" width="1.5" height="1.5" fill="#d2d5dc"/>
<path d="M7.5 11.5 L10.5 8.5" stroke="#d8d8d8" stroke-width="1"/>
<path d="M13 4 L20 4 L16.5 8 Z" fill="#b9b9b0"/>
</svg>
<div style="left:745px;top:483px;width:100px;height:20px;border:1px solid #7a7a7a;background:#f0f0f0;box-shadow:inset 0 0 0 1px #fff;"></div>
<div style="left:745px;top:509px;width:197px;height:20px;border:1px solid #7a7a7a;background:#f0f0f0;box-shadow:inset 0 0 0 1px #fff;"></div>
<div style="left:745px;top:535px;width:228px;height:44px;border:1px solid #7a7a7a;background:#f0f0f0;box-shadow:inset 0 0 0 1px #fff;"></div>
<div style="left:954px;top:536px;width:1px;height:42px;background:#ffffff;"></div>
<svg style="position:absolute;left:0;top:0;overflow:visible" width="1" height="1">
<path d="M958.7 548.4 L962.5 544.4 L966.3 548.4" stroke="#bdbdbd" stroke-width="1.9" fill="none"/>
<path d="M958.7 567 L962.5 571 L966.3 567" stroke="#bdbdbd" stroke-width="1.9" fill="none"/>
</svg>
<div style="left:745px;top:588px;width:13px;height:13px;border:1px solid #cccccc;background:#fff;"></div>
<div class="t m" style="left:764px;top:589px;font-size:12px;color:#6d6d6d;transform:scaleX(0.89);">Asiakas maksanut</div>
<div style="left:745px;top:614px;width:13px;height:13px;border:1px solid #cccccc;background:#fff;"></div>
<div class="t m" style="left:764px;top:615px;font-size:12px;color:#6d6d6d;transform:scaleX(0.89);">Tilitetty asiakkaalle</div>
<div style="left:745px;top:639px;width:13px;height:13px;border:1px solid #cccccc;background:#fff;"></div>
<div class="t m" style="left:764px;top:640px;font-size:12px;color:#6d6d6d;transform:scaleX(0.89);">Seuraava asiakas</div>
<div style="left:670px;top:613px;width:67px;height:17px;border:1px solid #bfbfbf;background:#cccccc;"></div>
<div class="t m" style="left:678px;top:617px;font-size:12px;color:#6d6d6d;transform:scaleX(0.89);">Viivakoodi</div>
<div style="left:670px;top:639px;width:67px;height:17px;border:1px solid #adadad;background:#e1e1e1;"></div>
<div class="t m" style="left:681px;top:643px;font-size:12px;color:#000;transform:scaleX(0.89);">Tulosta...</div>
<div style="left:669px;top:678px;width:95px;height:21px;border:1px solid #adadad;background:#e1e1e1;"></div>
<div class="t m" style="left:694px;top:683px;font-size:12px;color:#000;transform:scaleX(0.89);">Uusi osto</div>
<div style="left:772px;top:678px;width:95px;height:21px;border:1px solid #bfbfbf;background:#cccccc;"></div>
<div class="t m" style="left:793px;top:683px;font-size:12px;color:#6d6d6d;transform:scaleX(0.89);">Poista osto</div>
<div style="left:875px;top:678px;width:95px;height:21px;border:1px solid #adadad;background:#e1e1e1;"></div>
<div class="t m" style="left:891px;top:683px;font-size:12px;color:#000;transform:scaleX(0.89);">Tallenna osto</div>
<div class="t m" style="left:1000px;top:65px;font-size:12px;color:#000;transform:scaleX(0.905);">Seuraavaksi vapautuvat pöydät:</div>
<div style="left:997px;top:86px;width:336px;height:335px;border:1px solid #828790;background:#fff;"></div>
<div style="left:1041px;top:88px;width:1px;height:24px;background:#e5e5e5;"></div>
<div style="left:1131px;top:88px;width:1px;height:24px;background:#e5e5e5;"></div>
<div style="left:1281px;top:88px;width:1px;height:24px;background:#e5e5e5;"></div>
<div class="t m" style="left:1005px;top:94px;font-size:12px;color:#000;transform:scaleX(0.89);">Pöytä</div>
<div class="t m" style="left:1048px;top:94px;font-size:12px;color:#000;transform:scaleX(0.89);">Vapaa alkaen</div>
<div class="t m" style="left:1138px;top:94px;font-size:12px;color:#000;transform:scaleX(0.89);">Asiakas</div>
<div style="left:999px;top:128px;width:332px;height:1px;background:#f0f0f0;"></div>
<div style="left:999px;top:145px;width:332px;height:1px;background:#f0f0f0;"></div>
<div style="left:999px;top:162px;width:332px;height:1px;background:#f0f0f0;"></div>
<div style="left:999px;top:179px;width:332px;height:1px;background:#f0f0f0;"></div>
<div style="left:999px;top:196px;width:332px;height:1px;background:#f0f0f0;"></div>
<div style="left:999px;top:213px;width:332px;height:1px;background:#f0f0f0;"></div>
<div style="left:999px;top:230px;width:332px;height:1px;background:#f0f0f0;"></div>
<div style="left:999px;top:247px;width:332px;height:1px;background:#f0f0f0;"></div>
<div style="left:999px;top:264px;width:332px;height:1px;background:#f0f0f0;"></div>
<div style="left:999px;top:281px;width:332px;height:1px;background:#f0f0f0;"></div>
<div style="left:999px;top:298px;width:332px;height:1px;background:#f0f0f0;"></div>
<div style="left:999px;top:315px;width:332px;height:1px;background:#f0f0f0;"></div>
<div style="left:999px;top:332px;width:332px;height:1px;background:#f0f0f0;"></div>
<div style="left:999px;top:349px;width:332px;height:1px;background:#f0f0f0;"></div>
<div style="left:999px;top:366px;width:332px;height:1px;background:#f0f0f0;"></div>
<div style="left:999px;top:383px;width:332px;height:1px;background:#f0f0f0;"></div>
<div style="left:999px;top:400px;width:332px;height:1px;background:#f0f0f0;"></div>
<div style="left:999px;top:417px;width:332px;height:1px;background:#f0f0f0;"></div>
<div style="left:1042px;top:112px;width:1px;height:308px;background:#f0f0f0;"></div>
<div style="left:1132px;top:112px;width:1px;height:308px;background:#f0f0f0;"></div>
<div style="left:1282px;top:112px;width:1px;height:308px;background:#f0f0f0;"></div>
<div class="t m" style="left:1005px;top:115px;font-size:12px;color:#000;transform:scaleX(0.89);">63</div>
<div class="t m" style="left:1044px;top:115px;font-size:12px;color:#000;transform:scaleX(0.89);">7.2.2019</div>
<div class="t m" style="left:1138px;top:115px;font-size:12px;color:#000;transform:scaleX(0.89);">Lauri Alho</div>
<div class="t m" style="left:1005px;top:132px;font-size:12px;color:#000;transform:scaleX(0.89);">3</div>
<div class="t m" style="left:1044px;top:132px;font-size:12px;color:#000;transform:scaleX(0.89);">8.2.2019</div>
<div class="t m" style="left:1138px;top:132px;font-size:12px;color:#000;transform:scaleX(0.89);">Table Manager</div>
<div class="t m" style="left:1005px;top:149px;font-size:12px;color:#000;transform:scaleX(0.89);">25</div>
<div class="t m" style="left:1044px;top:149px;font-size:12px;color:#000;transform:scaleX(0.89);">9.2.2019</div>
<div class="t m" style="left:1138px;top:149px;font-size:12px;color:#000;transform:scaleX(0.89);">Asiakas 002</div>
<div class="t m" style="left:1005px;top:166px;font-size:12px;color:#000;transform:scaleX(0.89);">1</div>
<div class="t m" style="left:1044px;top:166px;font-size:12px;color:#000;transform:scaleX(0.89);">19.2.2019</div>
<div class="t m" style="left:1138px;top:166px;font-size:12px;color:#000;transform:scaleX(0.89);">Lauri Alho</div>
<div class="t m" style="left:1005px;top:183px;font-size:12px;color:#000;transform:scaleX(0.89);">2</div>
<div class="t m" style="left:1044px;top:183px;font-size:12px;color:#000;transform:scaleX(0.89);">21.2.2019</div>
<div class="t m" style="left:1138px;top:183px;font-size:12px;color:#000;transform:scaleX(0.89);">Asiakas 001</div>
<div class="t m" style="left:1005px;top:200px;font-size:12px;color:#000;transform:scaleX(0.89);">14</div>
<div class="t m" style="left:1044px;top:200px;font-size:12px;color:#000;transform:scaleX(0.89);">21.2.2019</div>
<div class="t m" style="left:1138px;top:200px;font-size:12px;color:#000;transform:scaleX(0.89);">Manager Asiakas</div>
<div class="t m" style="left:1005px;top:217px;font-size:12px;color:#000;transform:scaleX(0.89);">4</div>
<div class="t m" style="left:1044px;top:217px;font-size:12px;color:#000;transform:scaleX(0.89);">28.2.2019</div>
<div class="t m" style="left:1138px;top:217px;font-size:12px;color:#000;transform:scaleX(0.89);">Manager Asiakas</div>
<div class="t m" style="left:1003px;top:434px;font-size:12px;color:#000;transform:scaleX(0.89);">Asiakas:</div>
<div style="left:1067px;top:430px;width:263px;height:20px;border:1px solid #7a7a7a;background:#f0f0f0;box-shadow:inset 0 0 0 1px #fff;"></div>
<div class="t m" style="left:1003px;top:459px;font-size:12px;color:#000;transform:scaleX(0.89);">Puh:</div>
<div style="left:1067px;top:455px;width:263px;height:20px;border:1px solid #7a7a7a;background:#f0f0f0;box-shadow:inset 0 0 0 1px #fff;"></div>
<div class="t m" style="left:1003px;top:484px;font-size:12px;color:#000;transform:scaleX(0.89);">@:</div>
<div style="left:1067px;top:480px;width:263px;height:20px;border:1px solid #7a7a7a;background:#f0f0f0;box-shadow:inset 0 0 0 1px #fff;"></div>
<div class="t m" style="left:1003px;top:509px;font-size:12px;color:#000;transform:scaleX(0.89);">Alku pvm:</div>
<div class="t m" style="left:1003px;top:534px;font-size:12px;color:#000;transform:scaleX(0.89);">Lopp pvm:</div>
<div style="left:1067px;top:505px;width:263px;height:20px;border:1px solid #cccccc;background:#fff;"></div>
<div class="t m" style="left:1083px;top:509px;font-size:12px;color:#6d6d6d;transform:scaleX(0.89);">tiistai</div>
<div class="t m" style="left:1131px;top:509px;font-size:12px;color:#6d6d6d;transform:scaleX(0.89);">5.</div>
<div class="t m" style="left:1146px;top:509px;font-size:12px;color:#6d6d6d;transform:scaleX(0.89);">helmikuuta</div>
<div class="t m" style="left:1204px;top:509px;font-size:12px;color:#6d6d6d;transform:scaleX(0.89);">2019</div>
<svg style="position:absolute;left:1303px;top:509px" width="22" height="13" viewBox="0 0 22 13">
<rect x="0.5" y="0.5" width="10" height="11" rx="1.5" fill="#f6f6f8" stroke="#cbcbcb" stroke-width="1"/>
<rect x="2.3" y="3.0" width="1.5" height="1.5" fill="#d2d5dc"/><rect x="2.3" y="5.5" width="1.5" height="1.5" fill="#d2d5dc"/><rect x="2.3" y="8.0" width="1.5" height="1.5" fill="#d2d5dc"/><rect x="4.8" y="3.0" width="1.5" height="1.5" fill="#d2d5dc"/><rect x="4.8" y="5.5" width="1.5" height="1.5" fill="#d2d5dc"/><rect x="4.8" y="8.0" width="1.5" height="1.5" fill="#d2d5dc"/><rect x="7.3" y="3.0" width="1.5" height="1.5" fill="#d2d5dc"/><rect x="7.3" y="5.5" width="1.5" height="1.5" fill="#d2d5dc"/><rect x="7.3" y="8.0" width="1.5" height="1.5" fill="#d2d5dc"/>
<path d="M7.5 11.5 L10.5 8.5" stroke="#d8d8d8" stroke-width="1"/>
<path d="M13 4 L20 4 L16.5 8 Z" fill="#b9b9b0"/>
</svg>
<div style="left:1067px;top:530px;width:263px;height:20px;border:1px solid #cccccc;background:#fff;"></div>
<div class="t m" style="left:1083px;top:534px;font-size:12px;color:#6d6d6d;transform:scaleX(0.89);">tiistai</div>
<div class="t m" style="left:1131px;top:534px;font-size:12px;color:#6d6d6d;transform:scaleX(0.89);">5.</div>
<div class="t m" style="left:1146px;top:534px;font-size:12px;color:#6d6d6d;transform:scaleX(0.89);">helmikuuta</div>
<div class="t m" style="left:1204px;top:534px;font-size:12px;color:#6d6d6d;transform:scaleX(0.89);">2019</div>
<svg style="position:absolute;left:1303px;top:534px" width="22" height="13" viewBox="0 0 22 13">
<rect x="0.5" y="0.5" width="10" height="11" rx="1.5" fill="#f6f6f8" stroke="#cbcbcb" stroke-width="1"/>
<rect x="2.3" y="3.0" width="1.5" height="1.5" fill="#d2d5dc"/><rect x="2.3" y="5.5" width="1.5" height="1.5" fill="#d2d5dc"/><rect x="2.3" y="8.0" width="1.5" height="1.5" fill="#d2d5dc"/><rect x="4.8" y="3.0" width="1.5" height="1.5" fill="#d2d5dc"/><rect x="4.8" y="5.5" width="1.5" height="1.5" fill="#d2d5dc"/><rect x="4.8" y="8.0" width="1.5" height="1.5" fill="#d2d5dc"/><rect x="7.3" y="3.0" width="1.5" height="1.5" fill="#d2d5dc"/><rect x="7.3" y="5.5" width="1.5" height="1.5" fill="#d2d5dc"/><rect x="7.3" y="8.0" width="1.5" height="1.5" fill="#d2d5dc"/>
<path d="M7.5 11.5 L10.5 8.5" stroke="#d8d8d8" stroke-width="1"/>
<path d="M13 4 L20 4 L16.5 8 Z" fill="#b9b9b0"/>
</svg>
<div class="t m" style="left:1003px;top:584px;font-size:12px;color:#000;transform:scaleX(0.89);">Lisätiedot:</div>
<div style="left:1067px;top:555px;width:263px;height:69px;border:1px solid #7a7a7a;background:#f0f0f0;box-shadow:inset 0 0 0 1px #fff;"></div>
<div style="left:1311px;top:556px;width:1px;height:67px;background:#ffffff;"></div>
<svg style="position:absolute;left:0;top:0;overflow:visible" width="1" height="1">
<path d="M1315.7 568.4 L1319.5 564.4 L1323.3 568.4" stroke="#bdbdbd" stroke-width="1.9" fill="none"/>
<path d="M1315.7 612 L1319.5 616 L1323.3 612" stroke="#bdbdbd" stroke-width="1.9" fill="none"/>
</svg>
<div style="left:1067px;top:632px;width:13px;height:13px;border:1px solid #cccccc;background:#fff;"></div>
<div class="t m" style="left:1086px;top:633px;font-size:12px;color:#6d6d6d;transform:scaleX(0.89);">Maksettu</div>
<div style="left:1067px;top:657px;width:13px;height:13px;border:1px solid #cccccc;background:#fff;"></div>
<div class="t m" style="left:1086px;top:658px;font-size:12px;color:#6d6d6d;transform:scaleX(0.89);">Varattu seuraavalle</div>
<svg style="position:absolute;left:0;top:0;overflow:visible" width="1" height="1">
<path d="M1296.9 694.3 C1297.1 691.6 1299.2 690.2 1302.3 690.2 C1305.6 690.2 1307.9 692.2 1307.9 694.9 C1307.9 697.4 1306.1 698.9 1303.0 700.9 C1299.6 703.1 1297.6 704.4 1296.6 705.9 L1309.5 705.9" stroke="#000" stroke-width="2.7" fill="none" stroke-linejoin="round"/>
<rect x="1317.3" y="688.8" width="3.8" height="18.1" fill="#000"/>
<polygon points="1316.6,688.8 1317.6,688.8 1317.6,692.2 1313.0,694.0 1312.9,691.4" fill="#000"/>
</svg>
</body></html>
